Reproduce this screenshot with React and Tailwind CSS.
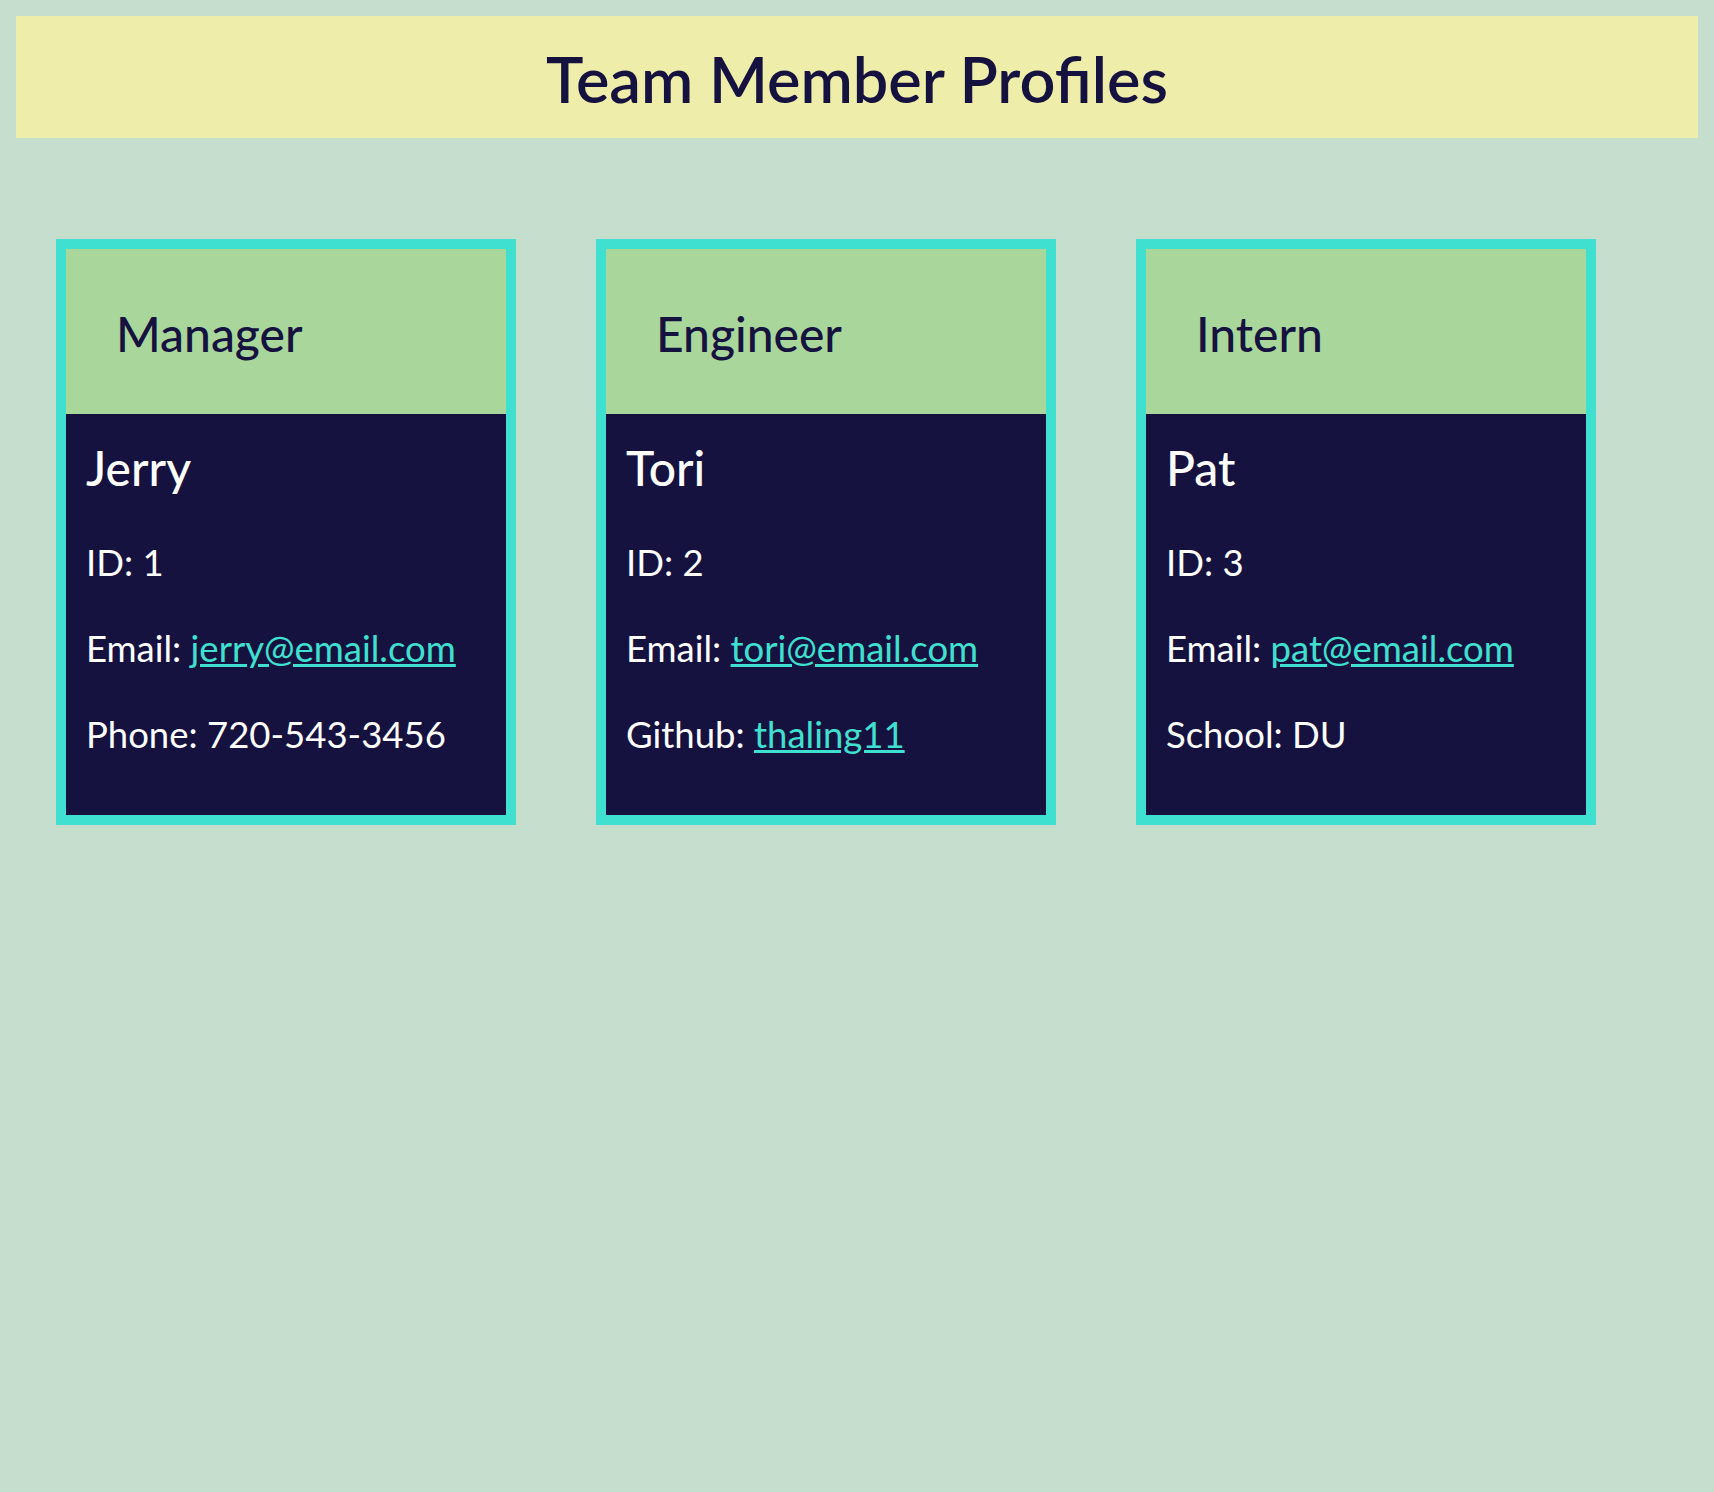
const team = [
    {
        role: "Manager",
        name: "Jerry",
        id: 1,
        email: "jerry@email.com",
        extra: { label: "Phone", value: "720-543-3456" },
    },
    {
        role: "Engineer",
        name: "Tori",
        id: 2,
        email: "tori@email.com",
        extra: { label: "Github", value: "thaling11", link: true },
    },
    {
        role: "Intern",
        name: "Pat",
        id: 3,
        email: "pat@email.com",
        extra: { label: "School", value: "DU" },
    },
];

const ProfileCard = ({ member }) => {
    return (
        <div className="w-[460px] border-[10px] border-[#40e0d0] bg-[#16123f]">
            <div className="h-[165px] pt-[5px] pl-[50px] flex items-center bg-[#a9d79b]">
                <h2 className="text-[48px] leading-[58px] font-medium text-[#16123f]">{member.role}</h2>
            </div>
            <div className="pt-[25px] pb-[38px] pl-[20px] text-white">
                <h3 className="text-[48px] leading-[58px] font-medium">{member.name}</h3>
                <div className="mt-[22px] text-[36.5px] leading-[86px]">
                    <p>ID: {member.id}</p>
                    <p>
                        Email:{" "}
                        <a href={`mailto:${member.email}`} className="text-[#40e0d0] underline">
                            {member.email}
                        </a>
                    </p>
                    <p>
                        {member.extra.label}:{" "}
                        {member.extra.link ? (
                            <a href="#" className="text-[#40e0d0] underline">
                                {member.extra.value}
                            </a>
                        ) : (
                            member.extra.value
                        )}
                    </p>
                </div>
            </div>
        </div>
    );
};

const App = () => {
    return (
        <div className="min-h-screen bg-[#c6dece] p-[16px] font-['Lato',sans-serif]">
            <header className="h-[122px] pt-[4px] bg-[#eeeeaa]">
                <h1 className="text-center text-[63px] leading-[118px] font-semibold text-[#16123f]">
                    Team Member Profiles
                </h1>
            </header>

            <div className="mt-[101px] px-[40px] flex gap-[80px] items-start">
                {team.map((member) => (
                    <ProfileCard key={member.id} member={member} />
                ))}
            </div>
        </div>
    );
};

export default App;
